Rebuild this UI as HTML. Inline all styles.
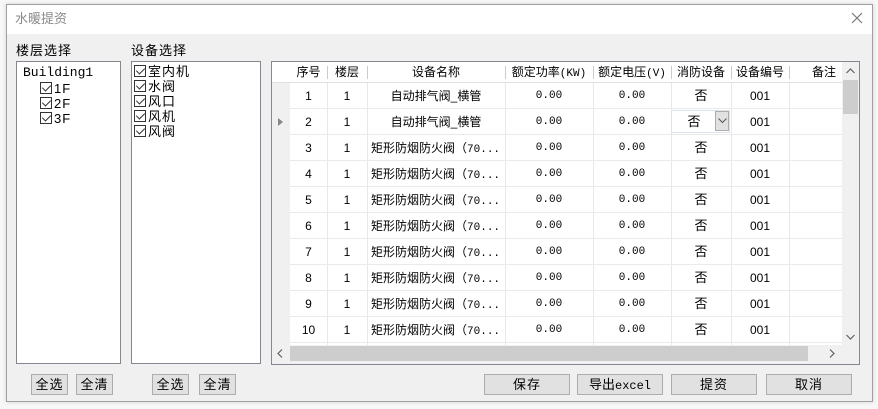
<!DOCTYPE html>
<html><head><meta charset="utf-8"><style>
*{margin:0;padding:0;box-sizing:border-box}
body{width:878px;height:409px;background:#f7f7f7;font-family:"Liberation Sans","Noto Sans CJK SC",sans-serif;font-size:12px;color:#000;position:relative;overflow:hidden}
.win{position:absolute;left:6px;top:4px;width:867px;height:398px;background:#f0f0f0;border:1px solid #a0a0a0;box-shadow:0 0 4px rgba(0,0,0,.15)}
.a{position:absolute}
.box{position:absolute;background:#fff;border:1px solid #828790}
.lbl{position:absolute;font-size:13px;letter-spacing:1px}
.btn{position:absolute;height:21px;background:#e1e1e1;border:1px solid #adadad;text-align:center;line-height:19px;font-size:13px;letter-spacing:1px}
.cb{display:inline-block;width:12px;height:12px;border:1px solid #333;vertical-align:-1px;position:relative;background:#fff;margin-right:2px}
.cb:after{content:"";position:absolute;left:3px;top:0px;width:4px;height:7px;border:solid #333;border-width:0 1px 1px 0;transform:rotate(45deg)}
.item{position:absolute;font-size:13px;line-height:15px;white-space:nowrap;letter-spacing:1px}
.hd{position:absolute;top:0;height:21px;line-height:21px;text-align:center;font-size:12px}
.vl{position:absolute;width:1px;background:#e8e8e8}
.hl{position:absolute;height:1px;background:#eaeaea}
.c{position:absolute;text-align:center;line-height:26px;font-size:12px;white-space:nowrap}
.m{font-family:"Liberation Mono",monospace;font-size:11px}
</style></head><body>
<div class="win"></div>
<div class="a" style="left:7px;top:5px;width:865px;height:29px;background:#fff;color:#8a8a8a;font-size:13px;line-height:28px;padding-left:8px">水暖提资</div>
<svg class="a" style="left:851px;top:12px" width="12" height="12"><path d="M1 1L11 11M11 1L1 11" stroke="#777" stroke-width="1.2"/></svg>

<div class="lbl" style="left:16px;top:40px">楼层选择</div>
<div class="lbl" style="left:131px;top:40px">设备选择</div>

<div class="box" style="left:16px;top:61px;width:105px;height:303px">
 <div class="item" style="left:6px;top:3px;font-family:'Liberation Mono',monospace;letter-spacing:0">Building1</div>
 <div class="item" style="left:23px;top:19px"><span class="cb"></span>1F</div>
 <div class="item" style="left:23px;top:34px"><span class="cb"></span>2F</div>
 <div class="item" style="left:23px;top:49px"><span class="cb"></span>3F</div>
</div>
<div class="box" style="left:131px;top:61px;width:130px;height:303px">
 <div class="item" style="left:2px;top:2px"><span class="cb"></span>室内机</div>
 <div class="item" style="left:2px;top:17px"><span class="cb"></span>水阀</div>
 <div class="item" style="left:2px;top:32px"><span class="cb"></span>风口</div>
 <div class="item" style="left:2px;top:47px"><span class="cb"></span>风机</div>
 <div class="item" style="left:2px;top:62px"><span class="cb"></span>风阀</div>
</div>

<div class="box" style="left:271px;top:61px;width:589px;height:304px;background:#f0f0f0;border-color:#828790">
 <div class="a" style="left:0;top:0;width:570px;height:21px;background:#fff;border-bottom:1px solid #e0e0e0"></div>
 <div class="a" style="left:18px;top:21px;width:552px;height:262px;background:#fff"></div>
 <div class="a" style="left:0;top:21px;width:18px;height:262px;background:#f0f0f0"></div>
</div>
<div class="a" style="left:272px;top:62px">
 <div class="hd" style="left:18px;width:37px">序号</div>
 <div class="hd" style="left:55px;width:40px">楼层</div>
 <div class="hd" style="left:95px;width:138px">设备名称</div>
 <div class="hd" style="left:233px;width:88px">额定功率<span class="m">(KW)</span></div>
 <div class="hd" style="left:321px;width:78px">额定电压<span class="m">(V)</span></div>
 <div class="hd" style="left:399px;width:60px">消防设备</div>
 <div class="hd" style="left:459px;width:58px">设备编号</div>
 <div class="hd" style="left:517px;width:53px;text-align:right;padding-right:6px">备注</div>
 <div class="vl" style="left:55px;top:4px;height:13px;background:#ccc"></div>
 <div class="vl" style="left:95px;top:4px;height:13px;background:#ccc"></div>
 <div class="vl" style="left:233px;top:4px;height:13px;background:#ccc"></div>
 <div class="vl" style="left:321px;top:4px;height:13px;background:#ccc"></div>
 <div class="vl" style="left:399px;top:4px;height:13px;background:#ccc"></div>
 <div class="vl" style="left:459px;top:4px;height:13px;background:#ccc"></div>
 <div class="vl" style="left:517px;top:4px;height:13px;background:#ccc"></div>
</div>
<div class="a" style="left:272px;top:83px;width:570px;height:262px;overflow:hidden">
 <div class="vl" style="left:55px;top:0;height:262px"></div>
 <div class="vl" style="left:95px;top:0;height:262px"></div>
 <div class="vl" style="left:233px;top:0;height:262px"></div>
 <div class="vl" style="left:321px;top:0;height:262px"></div>
 <div class="vl" style="left:399px;top:0;height:262px"></div>
 <div class="vl" style="left:459px;top:0;height:262px"></div>
 <div class="vl" style="left:517px;top:0;height:262px"></div>
 <div class="hl" style="left:18px;top:25px;width:552px"></div>
 <div class="hl" style="left:18px;top:51px;width:552px"></div>
 <div class="hl" style="left:18px;top:77px;width:552px"></div>
 <div class="hl" style="left:18px;top:103px;width:552px"></div>
 <div class="hl" style="left:18px;top:129px;width:552px"></div>
 <div class="hl" style="left:18px;top:155px;width:552px"></div>
 <div class="hl" style="left:18px;top:181px;width:552px"></div>
 <div class="hl" style="left:18px;top:207px;width:552px"></div>
 <div class="hl" style="left:18px;top:233px;width:552px"></div>
 <div class="hl" style="left:18px;top:259px;width:552px"></div>
 <svg class="a" style="left:6px;top:35px" width="6" height="8"><path d="M0 0L5 4L0 8Z" fill="#888"/></svg>
 <div class="a" style="left:399px;top:27px;width:59px;height:23px;border:1px solid #dde3ea"></div>
 <div class="a" style="left:443px;top:28px;width:14px;height:20px;background:#e1e1e1;border:1px solid #adadad"></div>
 <svg class="a" style="left:446px;top:35px" width="9" height="6"><path d="M0.5 0.5L4.5 4.5L8.5 0.5" stroke="#555" fill="none"/></svg>
 <div id="rows"></div>
</div>
<script>
var h='';var names=['自动排气阀_横管','自动排气阀_横管'];
for(var i=0;i<10;i++){var t=i*26;var n=i<2?names[i]:'矩形防烟防火阀（<span class="m">70...</span>';
var al=i<2?'center':'left';
h+='<div class="c" style="left:18px;top:'+t+'px;width:37px">'+(i+1)+'</div>'+
'<div class="c" style="left:55px;top:'+t+'px;width:40px">1</div>'+
'<div class="c" style="left:'+(i<2?95:99)+'px;top:'+t+'px;width:'+(i<2?138:134)+'px;text-align:'+al+'">'+n+'</div>'+
'<div class="c m" style="left:233px;top:'+t+'px;width:88px">0.00</div>'+
'<div class="c m" style="left:321px;top:'+t+'px;width:78px">0.00</div>'+
'<div class="c" style="left:399px;top:'+t+'px;width:60px;font-size:13px'+(i==1?';padding-right:14px':'')+'">否</div>'+
'<div class="c" style="left:459px;top:'+t+'px;width:58px">001</div>';}
document.getElementById('rows').outerHTML=h;
</script>
<div class="a" style="left:842px;top:62px;width:17px;height:283px;background:#f0f0f0"></div>
<div class="a" style="left:843px;top:80px;width:15px;height:34px;background:#cdcdcd"></div>
<svg class="a" style="left:846px;top:68px" width="9" height="6"><path d="M0.5 5L4.5 1L8.5 5" stroke="#606060" fill="none" stroke-width="1.2"/></svg>
<svg class="a" style="left:846px;top:334px" width="9" height="6"><path d="M0.5 1L4.5 5L8.5 1" stroke="#606060" fill="none" stroke-width="1.2"/></svg>
<div class="a" style="left:272px;top:345px;width:570px;height:17px;background:#f0f0f0"></div>
<div class="a" style="left:290px;top:346px;width:518px;height:15px;background:#cdcdcd"></div>
<svg class="a" style="left:277px;top:349px" width="6" height="9"><path d="M5 0.5L1 4.5L5 8.5" stroke="#606060" fill="none" stroke-width="1.2"/></svg>
<svg class="a" style="left:829px;top:349px" width="6" height="9"><path d="M1 0.5L5 4.5L1 8.5" stroke="#606060" fill="none" stroke-width="1.2"/></svg>
<div class="a" style="left:842px;top:345px;width:17px;height:17px;background:#f0f0f0"></div>

<div class="btn" style="left:31px;top:374px;width:37px">全选</div>
<div class="btn" style="left:76px;top:374px;width:37px">全清</div>
<div class="btn" style="left:152px;top:374px;width:37px">全选</div>
<div class="btn" style="left:199px;top:374px;width:37px">全清</div>
<div class="btn" style="left:484px;top:374px;width:86px">保存</div>
<div class="btn" style="left:577px;top:374px;width:86px;letter-spacing:0">导出<span style="font-family:'Liberation Mono',monospace;font-size:12px">excel</span></div>
<div class="btn" style="left:671px;top:374px;width:86px">提资</div>
<div class="btn" style="left:766px;top:374px;width:86px">取消</div>
</body></html>
